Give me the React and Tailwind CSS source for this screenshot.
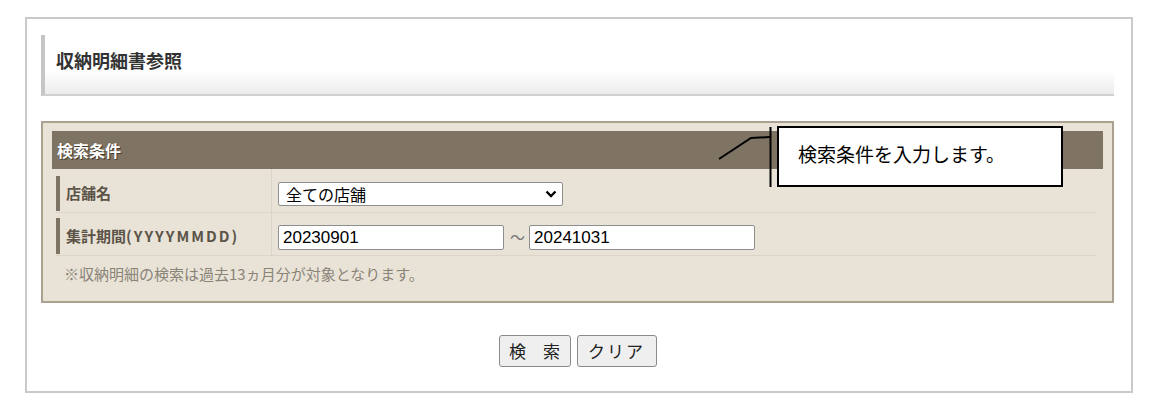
import React from "react";

const jp = { fontFamily: '"Noto Sans CJK JP", "Noto Sans", sans-serif' };
const lat = { fontFamily: '"Liberation Sans", Arial, sans-serif' };

export default function App() {
  return (
    <div className="relative w-[1162px] h-[420px] bg-white" style={jp}>
      <div className="absolute left-[25px] top-[17px] w-[1108px] h-[376px] border-2 border-[#cacaca] pl-[14px] pr-[17px] pt-[16px]">
        {/* Title */}
        <div className="h-[61px] flex items-center border-l-4 border-[#c6c6c6] border-b-2 border-b-[#d0d0d0] bg-gradient-to-b from-white from-60% to-[#ececec] pl-[11px] pb-[8px]">
          <span className="text-[18px] font-bold text-[#333]">収納明細書参照</span>
        </div>

        {/* Search panel */}
        <div className="mt-[25px] h-[182px] border-2 border-[#aaa190] bg-[#e9e3d7] px-[9px] pt-[8px]">
          <div className="h-[38px] bg-[#7f7464] flex items-center pl-[5px]">
            <span className="text-[16px] font-bold text-white [text-shadow:1px_1px_1px_#3a3228]">検索条件</span>
          </div>
          <div className="pl-[4px] pr-[6px]">
            <div className="flex h-[44px] border-b border-[#dcd5c7]">
              <div className="w-[210px] flex pt-[7px] pb-[1px]">
                <div className="h-full border-l-4 border-[#7f7464] pl-[6px] flex items-center text-[15px] font-bold text-[#5c5448]">
                  店舗名
                </div>
              </div>
              <div className="ml-[5px] flex-1 border-l border-[#dcd5c7] flex items-center pl-[6px] pt-[7px]">
                <div className="w-[285px] h-[24px] bg-white border border-[#8e8e8e] rounded-[2px] flex items-center justify-between pl-[7px] pr-[5px]">
                  <span className="text-[16px] text-black">全ての店舗</span>
                  <svg width="12" height="8" viewBox="0 0 12 8">
                    <path d="M1.5 1.5 L6 6 L10.5 1.5" stroke="#000" strokeWidth="2.4" fill="none" />
                  </svg>
                </div>
              </div>
            </div>
            <div className="flex h-[43px] border-b border-[#dcd5c7]">
              <div className="w-[210px] flex pt-[5px] pb-[1px]">
                <div className="h-full border-l-4 border-[#7f7464] pl-[6px] flex items-center text-[15px] font-bold text-[#5c5448]">
                  集計期間<span className="tracking-[2px]">(YYYYMMDD)</span>
                </div>
              </div>
              <div className="ml-[5px] flex-1 border-l border-[#dcd5c7] flex items-center pl-[6px] pt-[7px]">
                <div className="w-[226px] h-[25px] bg-white border border-[#8e8e8e] rounded-[2px] flex items-center pl-[4px] text-[17px] text-black" style={lat}>
                  20230901
                </div>
                <span className="ml-[6px] mr-[4px] text-[15px] text-[#777]">～</span>
                <div className="w-[226px] h-[25px] bg-white border border-[#8e8e8e] rounded-[2px] flex items-center pl-[4px] text-[17px] text-black" style={lat}>
                  20241031
                </div>
              </div>
            </div>
            <div className="pl-[8px] pt-[7px] text-[15px] text-[#8a8478]">
              ※収納明細の検索は過去13ヵ月分が対象となります。
            </div>
          </div>
        </div>

        {/* Buttons */}
        <div className="mt-[32px] flex justify-center gap-[6px]">
          <button className="w-[72px] h-[32px] bg-[#efefef] border border-[#8a8a8a] rounded-[3px] text-[17px] text-[#222]">検　索</button>
          <button className="w-[80px] h-[32px] bg-[#efefef] border border-[#8a8a8a] rounded-[3px] text-[17px] text-[#222] tracking-[2px]">クリア</button>
        </div>
      </div>

      {/* Callout */}
      <svg className="absolute left-[715px] top-[125px]" width="62" height="64" viewBox="0 0 62 64">
        <path d="M4 34 L36 13 L55 12" stroke="#000" strokeWidth="2" fill="none" />
        <line x1="55.5" y1="2" x2="55.5" y2="62" stroke="#000" strokeWidth="2" />
      </svg>
      <div className="absolute left-[777px] top-[126px] w-[286px] h-[61px] bg-white border-2 border-black flex items-center pl-[19px] pb-[4px]">
        <span className="text-[19px] text-black">検索条件を入力します。</span>
      </div>
    </div>
  );
}
